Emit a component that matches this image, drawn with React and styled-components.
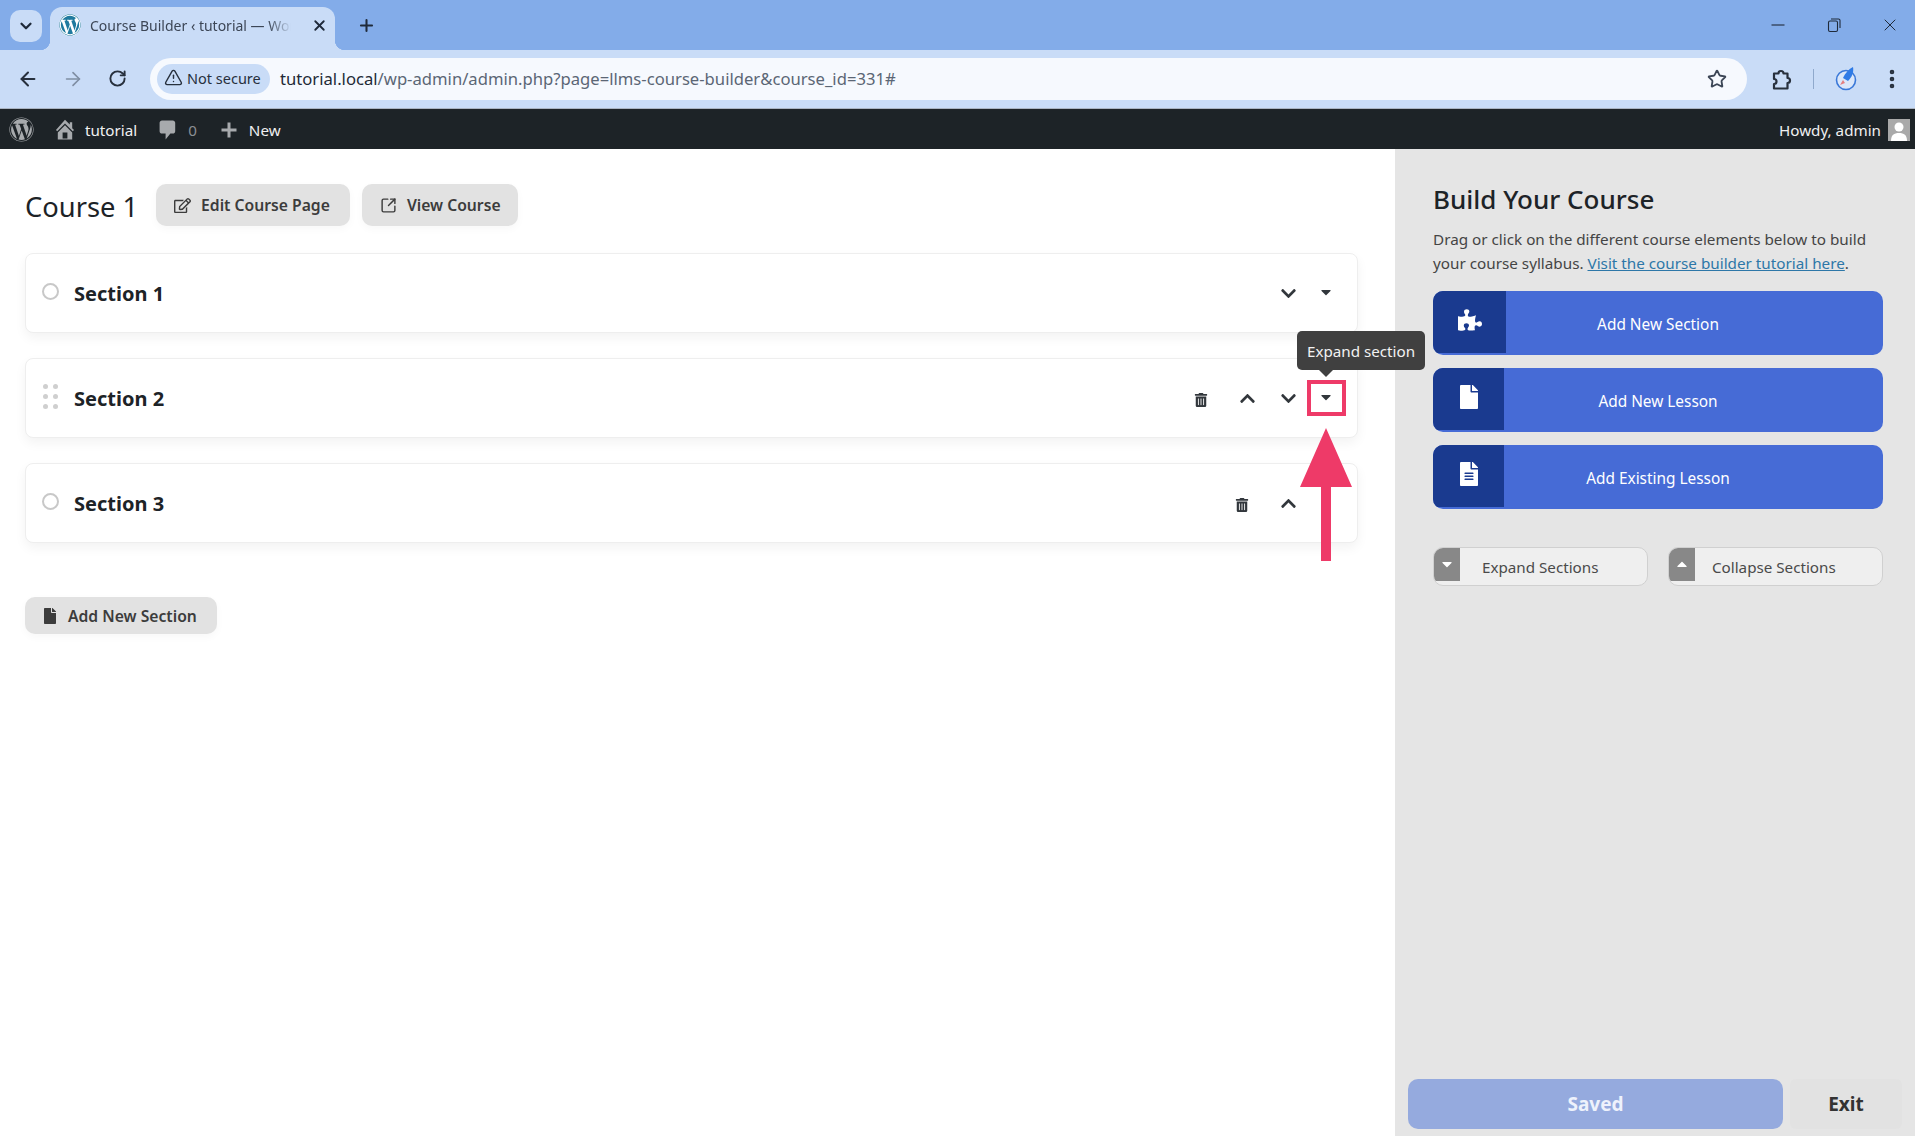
import React from "react";
import styled, { createGlobalStyle } from "styled-components";
import { FaWordpress, FaPuzzlePiece, FaFile, FaFileAlt, FaRegEdit, FaTrashAlt, FaChevronDown, FaChevronUp, FaCaretDown, FaCaretUp } from "react-icons/fa";
import { ArrowLeft, ArrowRight, RotateCw, TriangleAlert, Star, EllipsisVertical, ChevronDown, X, Plus, SquareArrowOutUpRight } from "lucide-react";

const Global = createGlobalStyle`
  html, body { margin: 0; padding: 0; background: #fff; }
  body { font-family: "Noto Sans", "Open Sans", Arial, sans-serif; overflow: hidden; }
  * { box-sizing: border-box; }
`;
const Page = styled.div`width: 1915px; height: 1136px; display: flex; flex-direction: column; overflow: hidden;`;

/* browser chrome */
const TabStrip = styled.div`height: 50px; flex: none; background: #83ace9; display: flex; align-items: flex-end; padding-left: 10px; color: #1f2a3a;`;
const TabMenu = styled.div`width: 32px; height: 32px; margin-bottom: 8px; background: #c9dcf7; border-radius: 10px; display: flex; align-items: center; justify-content: center;`;
const Tab = styled.div`
  position: relative; width: 285px; height: 43px; margin-left: 8px; padding: 0 7px 7px 9px;
  background: #c9dcf7; border-radius: 12px 12px 0 0; display: flex; align-items: center; gap: 9px;
  &::before, &::after { content: ""; position: absolute; bottom: 0; width: 10px; height: 10px; }
  &::before { left: -10px; background: radial-gradient(circle at 0 0, transparent 10px, #c9dcf7 10.5px); }
  &::after { right: -10px; background: radial-gradient(circle at 100% 0, transparent 10px, #c9dcf7 10.5px); }
`;
const Favicon = styled.span`width: 22px; height: 22px; border-radius: 50%; background: #fff; color: #1f7a9e; display: flex; align-items: center; justify-content: center; flex: none;`;
const TabTitle = styled.span`
  flex: 1; font-size: 14px; color: #3c4656; white-space: nowrap; overflow: hidden;
  mask-image: linear-gradient(90deg, #000 84%, transparent 95%);
`;
const NewTab = styled.div`width: 40px; height: 40px; margin: 0 0 5px 11px; display: flex; align-items: center; justify-content: center;`;
const WindowControls = styled.div`margin-left: auto; height: 50px; display: flex; align-items: center; margin-right: -3px;`;
const WinButton = styled.span`width: 56px; display: flex; align-items: center; justify-content: center;`;

const Toolbar = styled.div`height: 59px; flex: none; background: #c9dcf7; border-bottom: 1px solid #aab4c2; display: flex; align-items: center; padding: 0 0 1px 5px; color: #27303d;`;
const NavSlot = styled.span`width: 45px; display: flex; align-items: center; justify-content: center; color: ${p => (p.$dim ? "#7f8ea3" : "#27303d")};`;
const MenuSlot = styled(NavSlot)`margin-left: 11px;`;
const Address = styled.div`width: 1597px; height: 42px; margin-left: 10px; background: #f6f9fe; border-radius: 21px; display: flex; align-items: center; padding: 0 20px 0 7px;`;
const Secure = styled.div`width: 113px; height: 30px; background: #c9dcf7; border-radius: 15px; padding: 0 0 2px 7px; display: flex; align-items: center; gap: 4px; font-size: 14.5px; color: #27303d; white-space: nowrap;`;
const Url = styled.div`margin-left: 10px; font-size: 16.65px; color: #5b6675; white-space: nowrap; flex: 1; b { font-weight: 400; color: #222a36; }`;
const ToolRight = styled.div`flex: 1; display: flex; align-items: center; padding-left: 22px;`;
const Divider = styled.span`width: 1px; height: 20px; background: #8fa9cc; margin: 0 20px 0 20px;`;

/* admin bar */
const AdminBar = styled.div`height: 40px; flex: none; background: #1d2327; color: #f0f0f1; font-size: 15.2px; display: flex; align-items: center; padding: 1px 5px 0 9px;`;
const AdminIcon = styled.span`display: flex; color: #a7aaad; margin-left: ${p => p.$ml || 0}px;`;
const AdminLabel = styled.span`margin-left: ${p => p.$ml || 0}px; color: ${p => p.$muted ? "#8c8f94" : "#f0f0f1"};`;
const Howdy = styled.span`margin-left: auto;`;
const Avatar = styled.span`width: 22px; height: 22px; margin-left: 7px; background: #a9a9a9; display: block;`;

/* main */
const Main = styled.div`flex: 1; display: flex; min-height: 0;`;
const Builder = styled.div`flex: 1; padding: 35px 37px 0 25px; min-width: 0;`;
const CourseHead = styled.div`display: flex; align-items: center;`;
const CourseTitle = styled.h1`margin: 3px 18px 0 0; font-size: 27.3px; line-height: 39px; font-weight: 400; color: #1d2327;`;
const GreyButton = styled.button`
  height: ${p => p.$h || 42}px; padding: 0 ${p => p.$pr || 17}px 0 ${p => p.$pl || 18}px; margin-right: 12px;
  border: 0; border-radius: 10px; background: #e2e2e2; color: #3c3c3c; font: 600 15.7px "Noto Sans", sans-serif;
  display: inline-flex; align-items: center; gap: ${p => p.$gap || 10}px; box-shadow: 0 3px 8px rgba(0,0,0,.03);
`;
const SectionList = styled.div`margin-top: 27px; display: flex; flex-direction: column; gap: 25px;`;
const Card = styled.div`
  position: relative; z-index: ${p => p.$raised ? 2 : 1}; height: 80px; background: #fff; border: 1px solid #eeeeee; border-radius: 8px;
  box-shadow: 0 5px 12px rgba(0,0,0,.05); display: flex; align-items: center; padding: 0 12px 0 16px;
`;
const Radio = styled.span`width: 17px; height: 17px; border: 2px solid #c8c8c8; border-radius: 50%; margin-top: -3px;`;
const Grip = styled.span`width: 17px; display: grid; grid-template-columns: 5px 5px; gap: 5px; justify-content: center; margin-top: -3px; i { width: 5px; height: 5px; border-radius: 50%; background: #cfcfcf; display: block; }`;
const SectionName = styled.div`margin: 1px 0 0 15px; font-size: 20px; font-weight: 700; color: #1d2327; flex: 1;`;
const Slot = styled.span`position: relative; width: ${p => p.$w || 38}px; height: 36px; display: flex; align-items: center; justify-content: center; color: #32373c; flex: none;`;
const TrashIcon = styled(FaTrashAlt)`margin-top: 3px;`;
const CaretDownIcon = styled(FaCaretDown)`margin-top: -2px;`;
const CaretUpIcon = styled(FaCaretUp)`margin-top: -2px;`;
const Highlight = styled.span`position: absolute; inset: 0 -1px 0 0; border: 4px solid #ee3a68;`;
const Tooltip = styled.div`
  position: absolute; left: -10px; top: -49px; width: 128px; height: 39px; background: #404040; color: #f2f2f2; border-radius: 5px;
  font-size: 15.2px; display: flex; align-items: center; justify-content: center; white-space: nowrap;
  &::after { content: ""; position: absolute; left: 22px; bottom: -7px; border: 7px solid transparent; border-bottom: 0; border-top-color: #404040; }
`;
const PointerSvg = styled.svg`position: absolute; left: -7px; top: 48px; pointer-events: none;`;
const AddRow = styled.div`margin-top: 54px;`;

/* side panel */
const Side = styled.aside`width: 520px; flex: none; background: #e5e5e5; padding: 0 32px 0 38px; display: flex; flex-direction: column;`;
const SideTitle = styled.h2`margin: 30px 0 0; font-size: 26px; line-height: 40px; font-weight: 500; color: #1d2327;`;
const SideText = styled.p`margin: 8px 0 0; font-size: 15.25px; line-height: 24px; color: #444; a { color: #2d77a8; }`;
const ElementList = styled.div`margin-top: 16px; display: flex; flex-direction: column; gap: 13px;`;
const ElementButton = styled.div`
  position: relative; height: 64px; border-radius: 10px; background: #466bd6; overflow: hidden; padding-top: 2px;
  display: flex; align-items: center; justify-content: center; color: #fff; font-size: 15.4px;
`;
const ElementIcon = styled.span`
  position: absolute; left: 0; top: 0; bottom: 2px; width: ${p => p.$w}px; background: #1a3a8f;
  display: flex; align-items: center; justify-content: center; padding-bottom: 4px;
`;
const ToggleRow = styled.div`margin-top: 38px; display: flex; justify-content: space-between;`;
const ToggleButton = styled.div`
  position: relative; width: 215px; height: 39px; background: #efefef; border: 1px solid #d0d0d0; border-radius: 10px; overflow: hidden;
  display: flex; align-items: center; padding-left: ${p => p.$pl}px; font-size: 15.2px; color: #4a4a4a;
`;
const ToggleIcon = styled.span`position: absolute; left: 0; top: 0; width: 26px; height: 33px; background: #888; color: #fff; display: flex; align-items: center; justify-content: center;`;
const Footer = styled.div`margin: auto -19px 7px -25px; display: flex; gap: 7px; height: 50px;`;
const SaveButton = styled.div`width: 375px; border-radius: 10px; background: #95aade; color: #eef2fc; font-weight: 700; font-size: 19px; display: flex; align-items: center; justify-content: center;`;
const ExitButton = styled.div`width: 112px; border-radius: 6px; background: #e2e2e2; color: #333; font-weight: 700; font-size: 19px; display: flex; align-items: center; justify-content: center;`;

const Home = () => (<svg width="24" height="24" viewBox="0 0 20 20" fill="currentColor"><path d="M16 8.5l1.53 1.53-1.06 1.06L10 4.62l-6.47 6.47-1.06-1.06L10 1.5l4 4v-2h2v5zm-6-2.46l6 5.99V18H4v-5.97zM12 17v-5H8v5h4z" /></svg>);
const Bubble = () => (<svg width="24" height="24" viewBox="0 0 20 20" fill="currentColor"><path d="M5 2h9c1.1 0 2 .9 2 2v7c0 1.1-.9 2-2 2h-2l-4 5v-5H5c-1.1 0-2-.9-2-2V4c0-1.1.9-2 2-2z" /></svg>);
const PlusMark = () => (<svg width="20" height="20" viewBox="0 0 20 20" fill="currentColor"><path d="M17.5 8.5v3h-6v6h-3v-6h-6v-3h6v-6h3v6h6z" /></svg>);
const Person = () => (<svg width="22" height="22" viewBox="0 0 22 22" fill="#fff"><circle cx="11" cy="8" r="4.5" /><path d="M3 22c0-6 3-8 8-8s8 2 8 8z" /></svg>);
const Restore = () => (<svg width="16" height="16" viewBox="0 0 16 16" fill="none" stroke="#1f2a3a" strokeWidth="1.1"><rect x="2.5" y="4" width="9" height="10.5" rx="1.5" /><path d="M5 2h7.5a1.5 1.5 0 0 1 1.5 1.5V11" /></svg>);
const Minimize = () => (<svg width="16" height="16" viewBox="0 0 16 16" stroke="#1f2a3a" strokeWidth="1.1"><path d="M1.5 8h13" /></svg>);
const ExtIcon = () => (<svg width="24" height="24" viewBox="0 0 24 24" fill="none" stroke="#27303d" strokeWidth="2.2" strokeLinejoin="round"><path d="M5 6.5h4.5a2.5 2.5 0 0 1 5 0H18.5v4.5a2.5 2.5 0 0 1 0 5v5.5H5V17a2.5 2.5 0 0 0 0-5z" /></svg>);
const Rocket = () => (<svg width="24" height="26" viewBox="0 0 24 26"><circle cx="12" cy="14" r="9.5" fill="#dbe7f9" stroke="#3a78d8" strokeWidth="1.6" /><path d="M19 1c1 5-1 10-5 14l-5-3C11 7 15 3 19 1z" fill="#2f7be6" /><path d="M9 14l-3 5 5-2z" fill="#e57f7f" /></svg>);
const Pointer = () => (<PointerSvg width="52" height="133" viewBox="0 0 52 133" fill="#ee3a68"><path d="M26 0L52 59H31V133H21V59H0z" /></PointerSvg>);

export default function App() {
  return (
    <Page>
      <Global />
      <TabStrip>
        <TabMenu><ChevronDown size={18} strokeWidth={3} /></TabMenu>
        <Tab>
          <Favicon><FaWordpress size={22} /></Favicon>
          <TabTitle>Course Builder ‹ tutorial — WordPress</TabTitle>
          <X size={17} strokeWidth={2.6} />
        </Tab>
        <NewTab><Plus size={19} strokeWidth={2.6} /></NewTab>
        <WindowControls>
          <WinButton><Minimize /></WinButton>
          <WinButton><Restore /></WinButton>
          <WinButton><X size={20} strokeWidth={1.2} /></WinButton>
        </WindowControls>
      </TabStrip>
      <Toolbar>
        <NavSlot><ArrowLeft size={22} strokeWidth={2.2} /></NavSlot>
        <NavSlot $dim><ArrowRight size={22} strokeWidth={1.8} /></NavSlot>
        <NavSlot><RotateCw size={19} strokeWidth={2.4} /></NavSlot>
        <Address>
          <Secure><TriangleAlert size={19} strokeWidth={1.8} />Not secure</Secure>
          <Url><b>tutorial.local</b>/wp-admin/admin.php?page=llms-course-builder&amp;course_id=331#</Url>
          <Star size={20} strokeWidth={2.2} color="#3c4656" />
        </Address>
        <ToolRight>
          <ExtIcon />
          <Divider />
          <Rocket />
          <MenuSlot><EllipsisVertical size={24} strokeWidth={2.6} /></MenuSlot>
        </ToolRight>
      </Toolbar>
      <AdminBar>
        <AdminIcon><FaWordpress size={25} /></AdminIcon>
        <AdminIcon $ml={19}><Home /></AdminIcon>
        <AdminLabel $ml={8}>tutorial</AdminLabel>
        <AdminIcon $ml={19}><Bubble /></AdminIcon>
        <AdminLabel $ml={8} $muted>0</AdminLabel>
        <AdminIcon $ml={22}><PlusMark /></AdminIcon>
        <AdminLabel $ml={10}>New</AdminLabel>
        <Howdy>Howdy, admin</Howdy>
        <Avatar><Person /></Avatar>
      </AdminBar>
      <Main>
        <Builder>
          <CourseHead>
            <CourseTitle>Course 1</CourseTitle>
            <GreyButton $pr={20}><FaRegEdit size={17} />Edit Course Page</GreyButton>
            <GreyButton><SquareArrowOutUpRight size={17} strokeWidth={2} />View Course</GreyButton>
          </CourseHead>
          <SectionList>
            <Card>
              <Radio />
              <SectionName>Section 1</SectionName>
              <Slot><FaChevronDown size={17} /></Slot>
              <Slot><CaretDownIcon size={16} /></Slot>
            </Card>
            <Card $raised>
              <Grip><i /><i /><i /><i /><i /><i /></Grip>
              <SectionName>Section 2</SectionName>
              <Slot $w={48}><TrashIcon size={14} /></Slot>
              <Slot $w={44}><FaChevronUp size={17} /></Slot>
              <Slot><FaChevronDown size={17} /></Slot>
              <Slot>
                <CaretDownIcon size={16} />
                <Highlight />
                <Tooltip>Expand section</Tooltip>
                <Pointer />
              </Slot>
            </Card>
            <Card>
              <Radio />
              <SectionName>Section 3</SectionName>
              <Slot $w={54}><TrashIcon size={14} /></Slot>
              <Slot><FaChevronUp size={17} /></Slot>
              <Slot />
            </Card>
          </SectionList>
          <AddRow>
            <GreyButton $h={37} $pl={17} $pr={20} $gap={10}><FaFile size={16} />Add New Section</GreyButton>
          </AddRow>
        </Builder>
        <Side>
          <SideTitle>Build Your Course</SideTitle>
          <SideText>Drag or click on the different course elements below to build your course syllabus. <a href="#tutorial">Visit the course builder tutorial here</a>.</SideText>
          <ElementList>
            <ElementButton><ElementIcon $w={73}><FaPuzzlePiece size={24} /></ElementIcon>Add New Section</ElementButton>
            <ElementButton><ElementIcon $w={71}><FaFile size={24} /></ElementIcon>Add New Lesson</ElementButton>
            <ElementButton><ElementIcon $w={71}><FaFileAlt size={24} /></ElementIcon>Add Existing Lesson</ElementButton>
          </ElementList>
          <ToggleRow>
            <ToggleButton $pl={48}><ToggleIcon><CaretDownIcon size={16} /></ToggleIcon>Expand Sections</ToggleButton>
            <ToggleButton $pl={43}><ToggleIcon><CaretUpIcon size={16} /></ToggleIcon>Collapse Sections</ToggleButton>
          </ToggleRow>
          <Footer>
            <SaveButton>Saved</SaveButton>
            <ExitButton>Exit</ExitButton>
          </Footer>
        </Side>
      </Main>
    </Page>
  );
}
